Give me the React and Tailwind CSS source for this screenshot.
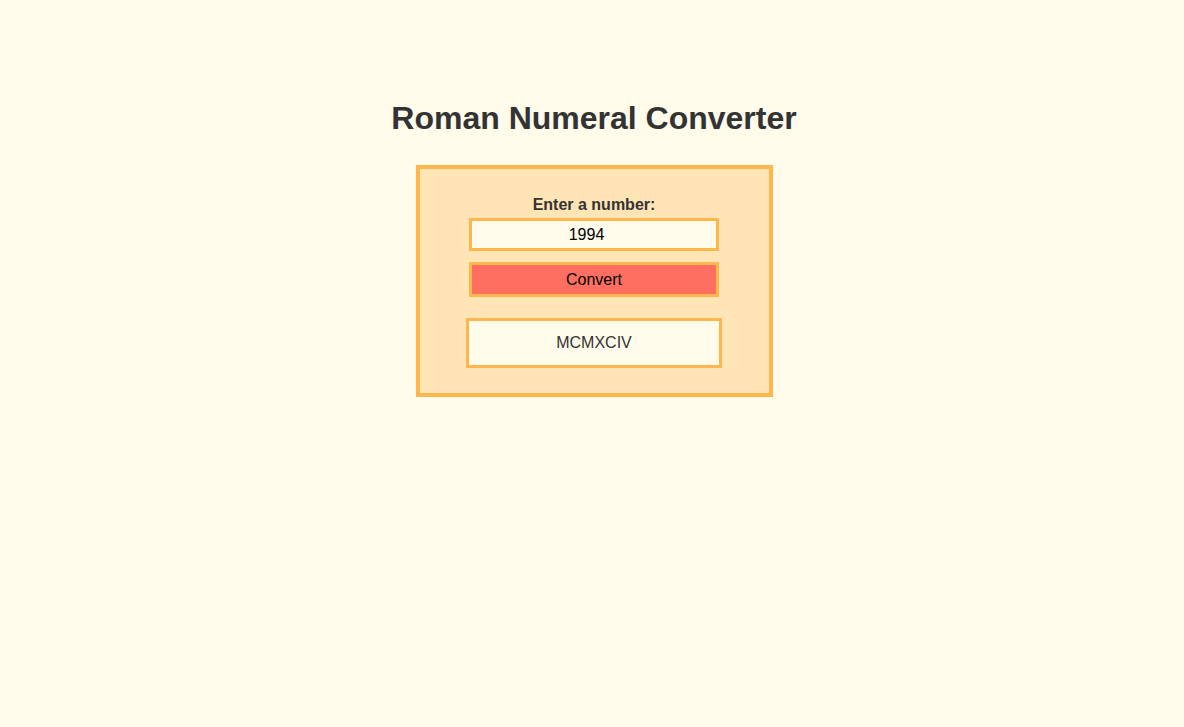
import React, { useState } from "react";

const toRoman = (num) => {
  const map = [
    [1000, "M"], [900, "CM"], [500, "D"], [400, "CD"],
    [100, "C"], [90, "XC"], [50, "L"], [40, "XL"],
    [10, "X"], [9, "IX"], [5, "V"], [4, "IV"], [1, "I"],
  ];
  let n = parseInt(num, 10);
  if (!n || n < 1) return "";
  let out = "";
  map.forEach(([v, s]) => {
    while (n >= v) {
      out += s;
      n -= v;
    }
  });
  return out;
};

const App = () => {
  const [value, setValue] = useState("1994");
  const [result, setResult] = useState("MCMXCIV");

  return (
    <div
      className="min-h-screen w-full bg-[#fffbeb] flex flex-col items-center pt-[100px] pl-[4px] text-[#333]"
      style={{ fontFamily: '"Liberation Sans", Arial, sans-serif' }}
    >
      <h1 className="text-[32px] font-bold leading-[37px] m-0">
        Roman Numeral Converter
      </h1>

      <div className="mt-[28px] w-[357px] bg-[#ffe4b5] border-[4px] border-[#ffb74d] flex flex-col items-center pt-[26px] pb-[25px]">
        <label className="text-[16px] font-bold leading-[19px]">
          Enter a number:
        </label>
        <input
          type="number"
          value={value}
          onChange={(e) => setValue(e.target.value)}
          className="mt-[4px] w-[250px] h-[33px] border-[3px] border-[#ffb74d] bg-[#fffbeb] text-center text-[16px] text-black outline-none"
        />
        <button
          onClick={() => setResult(toRoman(value))}
          className="mt-[11px] w-[250px] h-[35px] border-[3px] border-[#ffb74d] bg-[#ff6f61] text-[16px] text-black"
        >
          Convert
        </button>
        <div className="mt-[21px] w-[256px] h-[50px] border-[3px] border-[#ffb74d] bg-[#fffbeb] flex items-center justify-center text-[16px] text-[#333]">
          {result}
        </div>
      </div>
    </div>
  );
};

export default App;
